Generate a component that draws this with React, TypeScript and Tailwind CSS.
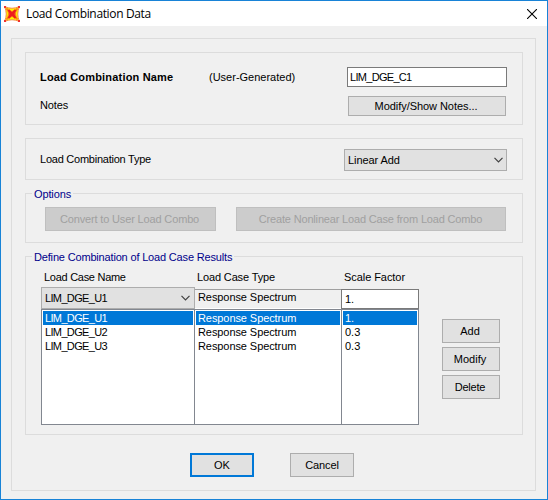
import React from 'react';

const panel = 'box-border border border-[#dcdcdc]';

function Button({ children, className = '' }: { children: React.ReactNode; className?: string }) {
  return (
    <button
      type="button"
      className={`flex shrink-0 items-center justify-center whitespace-nowrap ${className}`}
    >
      {children}
    </button>
  );
}

const gray = 'border border-[#adadad] bg-[#e1e1e1]';
const disabled = 'border border-[#bfbfbf] bg-[#cccccc] text-[#a0a0a0]';

function Chevron() {
  return (
    <svg width="9" height="6" viewBox="0 0 9 6" fill="none" stroke="#404040" strokeWidth="1.2">
      <path d="M0.5 0.8 L4.5 4.8 L8.5 0.8" />
    </svg>
  );
}

function Logo() {
  return (
    <svg width="16" height="16" viewBox="0 0 16 16">
      <path d="M0.5 0.5 Q8 4 15.5 0.5 Q12 8 15.5 15.5 Q8 12 0.5 15.5 Q4 8 0.5 0.5Z" fill="#fff200" stroke="#f78a4a" strokeWidth="1" />
      <path d="M2.5 2.5 Q8 9 13.5 2.5 Q9 8 13.5 13.5 Q8 7 2.5 13.5 Q7 8 2.5 2.5Z" fill="#ee1c1c" stroke="#fb7a1a" strokeWidth="1.4" />
      <path d="M4.5 4 L11.5 12 M11.5 4 L4.5 12" stroke="#ee1c1c" strokeWidth="2.2" />
      <path d="M0 0h2v2H0zM14 0h2v2h-2zM0 14h2v2H0zM14 14h2v2h-2z" fill="#f03030" />
    </svg>
  );
}

function Legend({ children, className = '' }: { children: React.ReactNode; className?: string }) {
  return (
    <div className={`ml-[6px] -mt-[7px] h-[14px] w-fit whitespace-nowrap bg-[#f0f0f0] pr-[2px] pl-[2px] text-[#00008b] ${className}`}>
      {children}
    </div>
  );
}

function Column({ items, className = '' }: { items: string[]; className?: string }) {
  return (
    <div className={`h-[116px] shrink-0 border border-[#828790] bg-white px-px pt-px ${className}`}>
      {items.map((item, i) => (
        <div
          key={i}
          className={`h-[14px] pl-[2px] whitespace-nowrap ${i === 0 ? 'bg-[#0078d7] text-white' : ''}`}
        >
          {item}
        </div>
      ))}
    </div>
  );
}

export default function App() {
  return (
    <div className="flex h-[500px] w-[548px] flex-col overflow-hidden border border-[#1883d7] bg-[#f0f0f0] font-['Liberation_Sans',Arial,sans-serif] text-[11px] leading-[14px] text-black">
      <header className="flex h-[25px] shrink-0 items-center justify-between bg-white pr-[10px] pl-[3px]">
        <div className="flex items-center gap-[6px]">
          <Logo />
          <span className="font-['Open_Sans','Noto_Sans',sans-serif] text-[12px] leading-[16px] tracking-[-0.35px]">Load Combination Data</span>
        </div>
        <svg width="10" height="10" viewBox="0 0 10 10" fill="none" stroke="#000" strokeWidth="1.1">
          <path d="M0 0 L10 10 M10 0 L0 10" />
        </svg>
      </header>

      <main className="mt-[12px] ml-[10px] flex h-[453px] w-[525px] shrink-0 flex-col border border-[#dcdcdc] pt-[13px] pl-[13px]">
        <section className={`${panel} h-[73px] w-[498px] shrink-0 pt-[14px] pl-[14px]`}>
          <div className="flex h-[20px]">
            <span className="mt-[3px] w-[169px] font-bold tracking-[0.18px] whitespace-nowrap">Load Combination Name</span>
            <span className="mt-[3px] w-[138px] whitespace-nowrap">(User-Generated)</span>
            <div className="h-[20px] w-[160px] border border-[#7a7a7a] bg-white pt-[2px] pl-[2px] tracking-[-0.7px]">LIM_DGE_C1</div>
          </div>
          <div className="mt-[9px] flex h-[20px]">
            <span className="mt-[2px] w-[308px] tracking-[-0.1px]">Notes</span>
            <Button className={`${gray} h-[20px] w-[158px] pr-[2px] tracking-[-0.05px]`}>Modify/Show Notes...</Button>
          </div>
        </section>

        <section className={`${panel} mt-[13px] flex h-[42px] w-[498px] shrink-0 pt-[10px] pl-[14px]`}>
          <span className="mt-[3px] w-[304px] tracking-[-0.24px] whitespace-nowrap">Load Combination Type</span>
          <div className={`${gray} flex h-[22px] w-[163px] items-center justify-between pr-[3px] pl-[3px]`}>
            <span className="tracking-[-0.08px]">Linear Add</span>
            <Chevron />
          </div>
        </section>

        <section className={`${panel} mt-[13px] h-[50px] w-[498px] shrink-0`}>
          <Legend className="tracking-[-0.12px]">Options</Legend>
          <div className="mt-[6px] flex gap-[20px] pl-[19px]">
            <Button className={`${disabled} h-[24px] w-[171px] pr-[2px] tracking-[-0.15px]`}>Convert to User Load Combo</Button>
            <Button className={`${disabled} h-[24px] w-[270px] pr-[1px] tracking-[-0.17px]`}>Create Nonlinear Load Case from Load Combo</Button>
          </div>
        </section>

        <section className={`${panel} mt-[13px] h-[179px] w-[498px] shrink-0`}>
          <Legend className="tracking-[-0.17px]">Define Combination of Load Case Results</Legend>
          <div className="flex">
            <div className="ml-[15px] w-[378px]">
              <div className="mt-[6px] flex h-[17px] pl-[3px]">
                <span className="w-[153px] tracking-[-0.28px]">Load Case Name</span>
                <span className="w-[147px] tracking-[-0.14px]">Load Case Type</span>
                <span className="tracking-[-0.06px]">Scale Factor</span>
              </div>
              <div className="flex h-[22px] items-end">
                <div className={`${gray} flex h-[22px] w-[154px] items-center justify-between pr-[4px] pl-[3px]`}>
                  <span className="tracking-[-0.65px]">LIM_DGE_U1</span>
                  <Chevron />
                </div>
                <div className="h-[20px] w-[146px] border-t border-b border-t-[#a0a0a0] border-b-white pl-[3px] tracking-[-0.08px]">Response Spectrum</div>
                <div className="h-[20px] w-[78px] border border-[#7a7a7a] bg-white pt-[2px] pl-[3px]">1.</div>
              </div>
              <div className="flex">
                <Column className="w-[154px] tracking-[-0.65px]" items={['LIM_DGE_U1', 'LIM_DGE_U2', 'LIM_DGE_U3']} />
                <Column className="-ml-px w-[148px] tracking-[-0.08px]" items={['Response Spectrum', 'Response Spectrum', 'Response Spectrum']} />
                <Column className="-ml-px w-[78px]" items={['1.', '0.3', '0.3']} />
              </div>
            </div>
            <div className="mt-[55px] ml-[23px] flex flex-col gap-[4px]">
              <Button className={`${gray} h-[24px] w-[58px] pr-[2px]`}>Add</Button>
              <Button className={`${gray} h-[24px] w-[58px] pr-[2px]`}>Modify</Button>
              <Button className={`${gray} h-[24px] w-[58px] pr-[2px] tracking-[-0.2px]`}>Delete</Button>
            </div>
          </div>
        </section>

        <footer className="mt-[18px] flex gap-[36px] pl-[165px]">
          <Button className="h-[24px] w-[64px] border-2 border-[#0078d7] bg-[#e1e1e1]">OK</Button>
          <Button className={`${gray} h-[24px] w-[64px] tracking-[-0.15px]`}>Cancel</Button>
        </footer>
      </main>
    </div>
  );
}
